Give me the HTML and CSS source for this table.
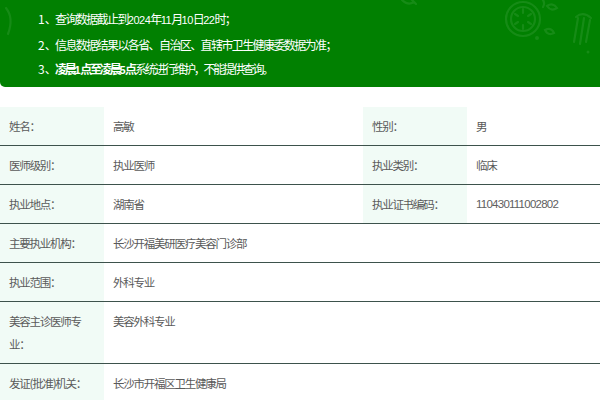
FILE: index.html
```html
<!DOCTYPE html>
<html lang="zh-CN">
<head>
<meta charset="utf-8">
<title>医师信息查询</title>
<link rel="stylesheet" href="styles.css">
</head>
<body>
<div class="notice">
  <svg class="deco" width="600" height="87" viewBox="0 0 600 87" aria-hidden="true">
    <g fill="none" stroke="#168b16" stroke-width="2.2" stroke-linecap="round">
      <circle cx="523" cy="19" r="17"/>
      <circle cx="523" cy="19" r="12"/>
      <path d="M523 9 v4 M531 14 l-3 2 M531 24 l-3 -2 M523 29 v-4 M515 24 l3 -2 M515 14 l3 2"/>
      <path d="M547 6 q6 -4 10 2 q-6 4 -10 -2z"/>
      <path d="M545 30 q6 -3 9 3 q-6 3 -9 -3z"/>
      <path d="M541 -2 q5 4 2 9"/>
      <path d="M578 18 l-4 24 M584 18 l-4 26 M590 20 l-4 22 M576 17 q7 -6 15 1"/>
      <path d="M402 0 q6 6 12 2 M410 -2 l6 6"/>
      <path d="M6 8 q8 10 2 26"/>
    </g>
    <g fill="#168b16">
      <circle cx="537" cy="38" r="2"/>
      <circle cx="588" cy="52" r="1.5"/>
    </g>
  </svg>
  <ol class="notice-list">
    <li><span class="num">1、</span>查询数据截止到<span class="d">2024</span>年<span class="d">11</span>月<span class="d">10</span>日<span class="d">22</span>时；</li>
    <li><span class="num">2、</span>信息数据结果以各省、自治区、直辖市卫生健康委数据为准；</li>
    <li class="tight"><span class="num">3、</span><b>凌晨<span class="d">1</span>点至凌晨<span class="d">5</span>点</b>系统进行维护，不能提供查询。</li>
  </ol>
</div>

<div class="info">
  <div class="row">
    <div class="label">姓名：</div>
    <div class="value">高敏</div>
    <div class="label">性别：</div>
    <div class="value">男</div>
  </div>
  <div class="row">
    <div class="label">医师级别：</div>
    <div class="value">执业医师</div>
    <div class="label">执业类别：</div>
    <div class="value">临床</div>
  </div>
  <div class="row">
    <div class="label">执业地点：</div>
    <div class="value">湖南省</div>
    <div class="label">执业证书编码：</div>
    <div class="value num-val">110430111002802</div>
  </div>
  <div class="row">
    <div class="label">主要执业机构：</div>
    <div class="value wide">长沙开福美研医疗美容门诊部</div>
  </div>
  <div class="row">
    <div class="label">执业范围：</div>
    <div class="value wide">外科专业</div>
  </div>
  <div class="row">
    <div class="label">美容主诊医师专业：</div>
    <div class="value wide">美容外科专业</div>
  </div>
  <div class="row">
    <div class="label">发证(批准)机关：</div>
    <div class="value wide">长沙市开福区卫生健康局</div>
  </div>
</div>
</body>
</html>
```

FILE: styles.css
```css
html, body {
  margin: 0;
  padding: 0;
  background: #ffffff;
}

body {
  width: 600px;
  font-family: "Noto Sans CJK SC", "Noto Sans", sans-serif;
}

.notice {
  position: relative;
  height: 87px;
  box-sizing: border-box;
  background: #018001;
  border-radius: 0 0 0 5px;
  padding: 7px 0 0 38px;
  overflow: hidden;
}

.deco {
  position: absolute;
  left: 0;
  top: 0;
}

.notice-list {
  position: relative;
  margin: 0;
  padding: 0;
  list-style: none;
  color: #ffffff;
  font-size: 12px;
  letter-spacing: -1.6px;
  line-height: 24.5px;
}

.notice-list li {
  white-space: nowrap;
}

.notice-list .tight {
  letter-spacing: -2.2px;
}

.notice-list .num {
  display: inline-block;
  width: 17px;
  letter-spacing: 0;
}

.notice-list .d {
  font-family: "Liberation Sans", "Noto Sans", sans-serif;
  font-size: 11px;
  letter-spacing: -0.5px;
}

.notice-list b {
  font-weight: 700;
}

.info {
  margin-top: 20px;
}

.row {
  display: grid;
  grid-template-columns: 104px 259px 104px 1fr;
  border-bottom: 1px solid #3d524c;
  color: #5a5a5a;
  font-size: 11.5px;
  letter-spacing: -1.25px;
  line-height: 23px;
}

.row .label,
.row .value {
  padding: 8px 8px 7px 9px;
}

.row .label {
  background: #f1fbf6;
}

.row .value {
  background: #ffffff;
}

.row .wide {
  grid-column: 2 / 5;
}

.row .num-val {
  font-family: "Liberation Sans", "Noto Sans", sans-serif;
  font-size: 11.5px;
  letter-spacing: -0.75px;
  color: #606060;
}
```
